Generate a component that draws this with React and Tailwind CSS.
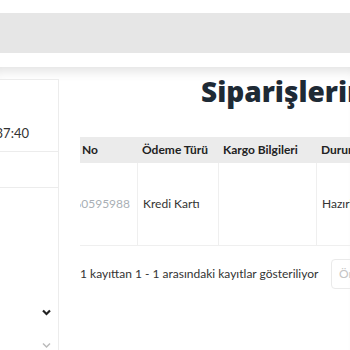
export default function App() {
  const font = { fontFamily: 'Lato, "Open Sans", sans-serif' };
  return (
    <div className="w-[350px] h-[350px] overflow-hidden bg-white text-[#2b2b2b]" style={font}>
      <div className="h-[13px] bg-white" />
      <div className="h-[40px] bg-[#e6e6e6]" />
      <div className="h-[14px] bg-white" />
      <div className="flex h-[283px] pt-[12px] shadow-[inset_0_12px_12px_-8px_rgba(0,0,0,0.12)]">
        <div className="w-[59px] shrink-0 border-t border-r border-[#ececec] bg-white flex flex-col">
          <div className="h-[72px] border-b border-[#ececec] flex items-end pb-[8px] justify-end pr-[29px] overflow-hidden whitespace-nowrap text-[13px] text-[#333]">
            12:37:40
          </div>
          <div className="h-[36px] border-b border-[#ececec]" />
          <div className="h-[128px] flex items-end justify-end pr-[7px]">
            <svg width="9" height="7" viewBox="0 0 9 7" fill="none" stroke="#222" strokeWidth="2.2">
              <path d="M1 1.5 L4.5 5 L8 1.5" />
            </svg>
          </div>
          <div className="flex justify-end pr-[7px] pt-[26px]">
            <svg width="9" height="7" viewBox="0 0 9 7" fill="none" stroke="#bbb" strokeWidth="1.5">
              <path d="M1 1.5 L4.5 5 L8 1.5" />
            </svg>
          </div>
        </div>
        <div className="flex-1 min-w-0 flex flex-col overflow-hidden">
          <div className="h-[58px] pl-[142px] whitespace-nowrap text-[28px] font-extrabold text-[#1e2a35] leading-[25px]" style={{ fontFamily: '"Open Sans", sans-serif' }}>
            Siparişlerim
          </div>
          <div className="ml-[21px] overflow-hidden">
            <div className="flex bg-[#ebebeb] h-[26px] items-center whitespace-nowrap text-[12px] font-bold text-[#222]">
              <div className="w-[57px] shrink-0 overflow-hidden flex justify-end pr-[39px]">Ref No</div>
              <div className="w-[81px] shrink-0 pl-[5px]">Ödeme Türü</div>
              <div className="w-[98px] shrink-0 pl-[5px]">Kargo Bilgileri</div>
              <div className="shrink-0 pl-[5px]">Durum</div>
            </div>
            <div className="flex h-[83px] border-b border-[#efefef] whitespace-nowrap text-[12px] text-[#333]">
              <div className="w-[57px] shrink-0 overflow-hidden flex justify-end items-center pr-[7px] text-[#a9afb5]">1160595988</div>
              <div className="w-[81px] shrink-0 pl-[5px] flex items-center border-l border-[#efefef]">Kredi Kartı</div>
              <div className="w-[98px] shrink-0 border-l border-[#efefef]" />
              <div className="shrink-0 pl-[5px] flex items-center border-l border-[#efefef]">Hazırlanıyor</div>
            </div>
            <div className="flex items-center h-[56px] whitespace-nowrap text-[12px] text-[#333]">
              <span className="w-[251px] shrink-0">1 kayıttan 1 - 1 arasındaki kayıtlar gösteriliyor</span>
              <div className="h-[30px] w-[60px] shrink-0 border border-[#eaeaea] rounded-[4px] pl-[7px] flex items-center text-[#c4c4c4]">Önceki</div>
            </div>
          </div>
        </div>
      </div>
    </div>
  );
}
